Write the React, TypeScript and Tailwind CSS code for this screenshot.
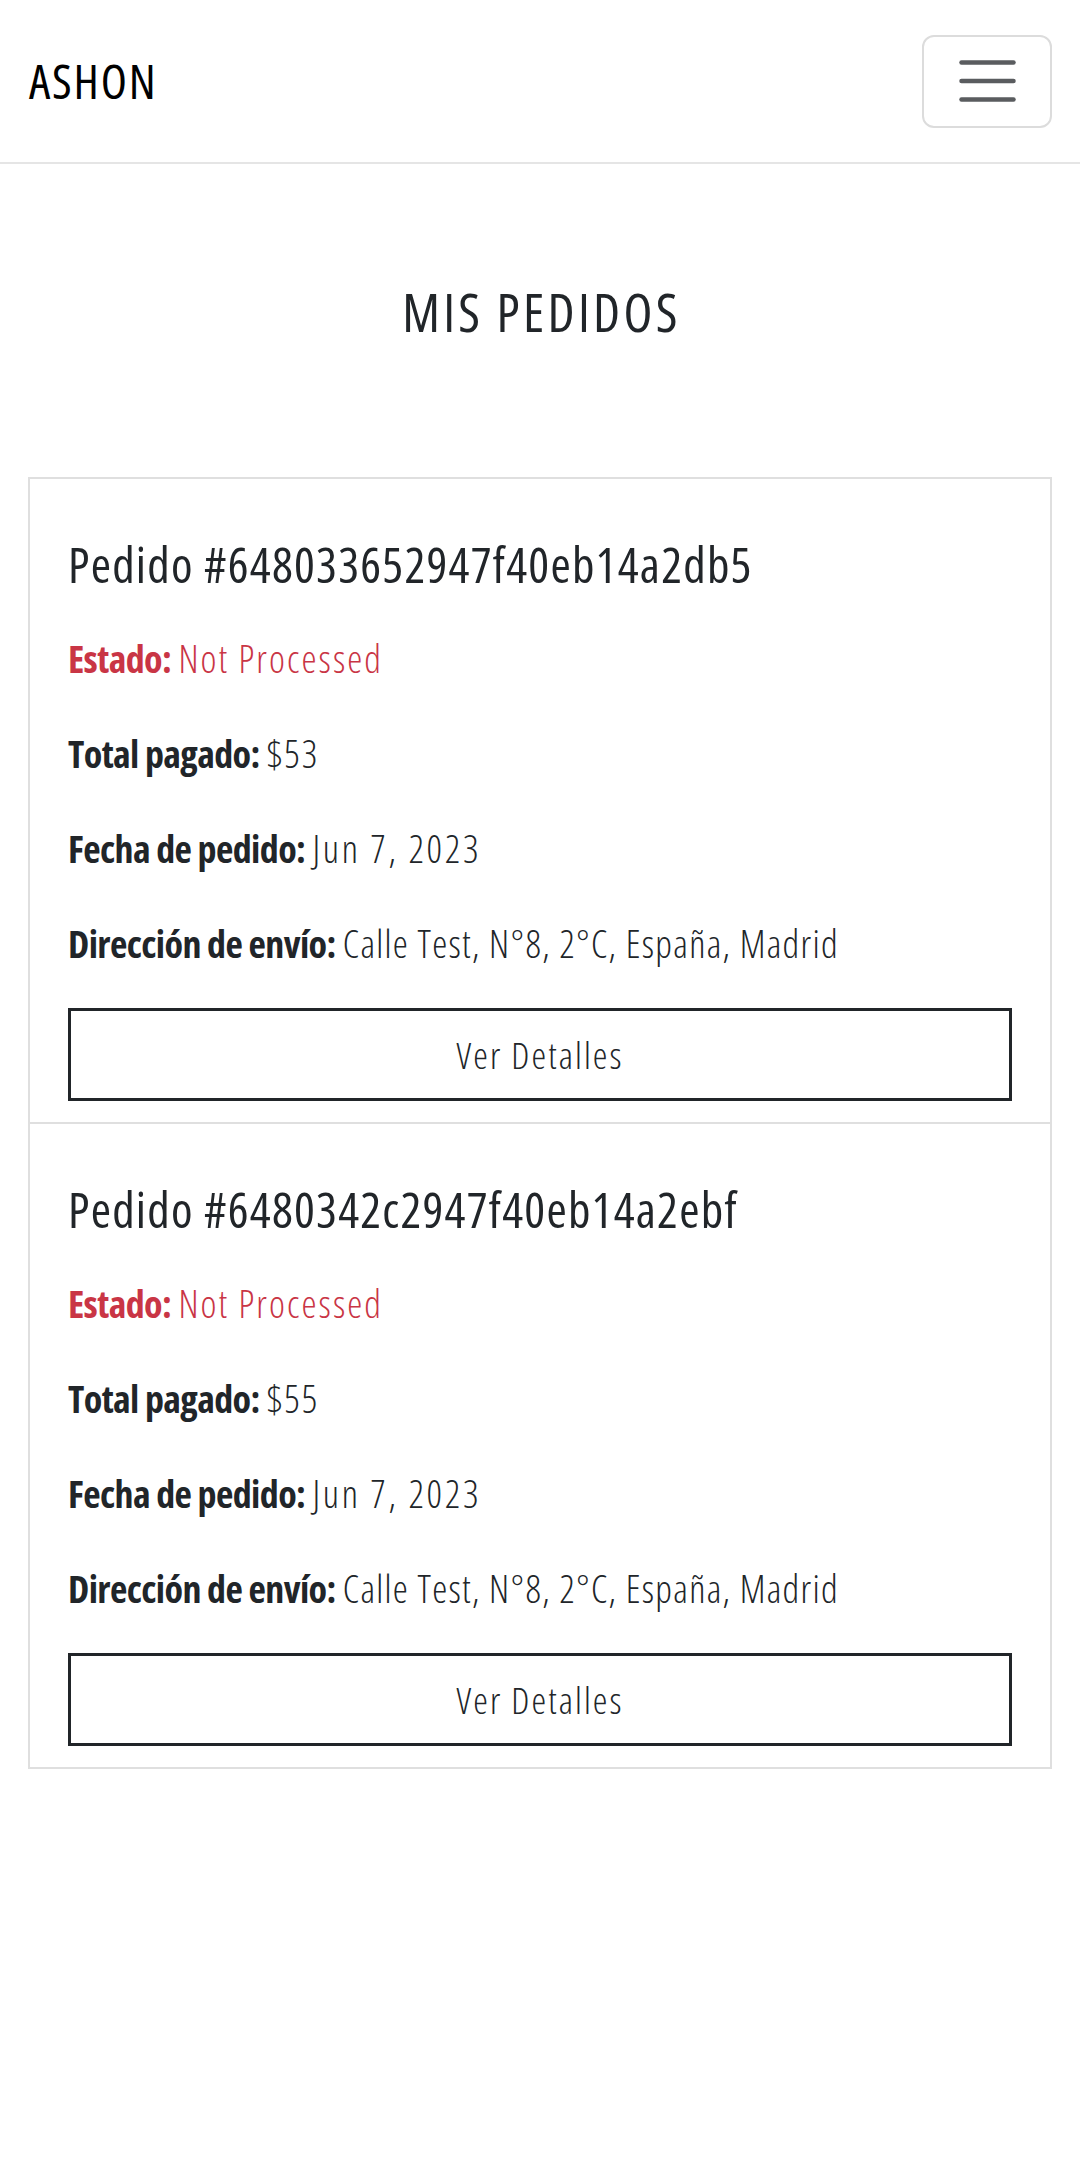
import React from "react";

type Order = {
  id: string;
  total: string;
  date: string;
  address: string;
};

const orders: Order[] = [
  {
    id: "648033652947f40eb14a2db5",
    total: "$53",
    date: "Jun 7, 2023",
    address: "Calle Test, N°8, 2°C, España, Madrid",
  },
  {
    id: "6480342c2947f40eb14a2ebf",
    total: "$55",
    date: "Jun 7, 2023",
    address: "Calle Test, N°8, 2°C, España, Madrid",
  },
];

function Hamburger() {
  return (
    <svg width="57" height="42" viewBox="0 0 57 42" fill="none">
      <line x1="2.5" y1="2.5" x2="54.5" y2="2.5" stroke="#5a5c5f" strokeWidth="4.5" strokeLinecap="round" />
      <line x1="2.5" y1="21" x2="54.5" y2="21" stroke="#5a5c5f" strokeWidth="4.5" strokeLinecap="round" />
      <line x1="2.5" y1="39.5" x2="54.5" y2="39.5" stroke="#5a5c5f" strokeWidth="4.5" strokeLinecap="round" />
    </svg>
  );
}

function Row({
  label,
  value,
  valueClass,
  danger,
  last,
}: {
  label: string;
  value: string;
  valueClass: string;
  danger?: boolean;
  last?: boolean;
}) {
  return (
    <div
      className={`text-[38px] leading-[56px] whitespace-nowrap font-stretch-condensed ${
        last ? "" : "mb-[39px]"
      } ${danger ? "text-[#c93545]" : "text-[#212529]"}`}
    >
      <span className="font-bold tracking-[-0.6px]">{label}</span>{" "}
      <span className={`font-light ${valueClass}`}>{value}</span>
    </div>
  );
}

function OrderCard({ order }: { order: Order }) {
  return (
    <div className="px-[38px] pt-[55px] pb-[21px]">
      <h5 className="text-[49px] leading-[60px] mb-[36px] text-[#212529] whitespace-nowrap font-normal font-stretch-condensed tracking-[1.25px]">
        Pedido #{order.id}
      </h5>
      <Row label="Estado:" value="Not Processed" valueClass="tracking-[2.1px]" danger />
      <Row label="Total pagado:" value={order.total} valueClass="tracking-[2px]" />
      <Row label="Fecha de pedido:" value={order.date} valueClass="tracking-[2.7px]" />
      <Row label="Dirección de envío:" value={order.address} valueClass="tracking-[1.3px]" last />
      <button className="mt-[37px] w-full h-[93px] border-[3px] border-[#212529] bg-white text-[37px] font-light font-stretch-condensed tracking-[2.1px] text-[#212529] flex items-center justify-center">
        Ver Detalles
      </button>
    </div>
  );
}

export default function App() {
  return (
    <div className="min-h-[2169px] bg-white font-['Open_Sans',sans-serif] text-[#212529]">
      <header className="h-[164px] border-b-2 border-[#e5e5e5] px-[28px] flex items-center justify-between">
        <div className="text-[48px] leading-none text-black pl-[1px] font-normal font-stretch-condensed tracking-[1.8px]">
          ASHON
        </div>
        <button className="w-[130px] h-[93px] border-2 border-[#dcdcdc] rounded-[12px] flex items-center justify-center bg-white">
          <Hamburger />
        </button>
      </header>
      <main>
        <h2 className="mt-[116px] pl-[3px] text-center text-[53px] leading-[64px] text-[#212529] font-normal font-stretch-condensed tracking-[3.3px]">
          MIS PEDIDOS
        </h2>
        <div className="mt-[133px] mx-[28px] border-2 border-[#dfdfdf] divide-y-2 divide-[#dfdfdf]">
          {orders.map((o) => (
            <OrderCard key={o.id} order={o} />
          ))}
        </div>
      </main>
    </div>
  );
}
